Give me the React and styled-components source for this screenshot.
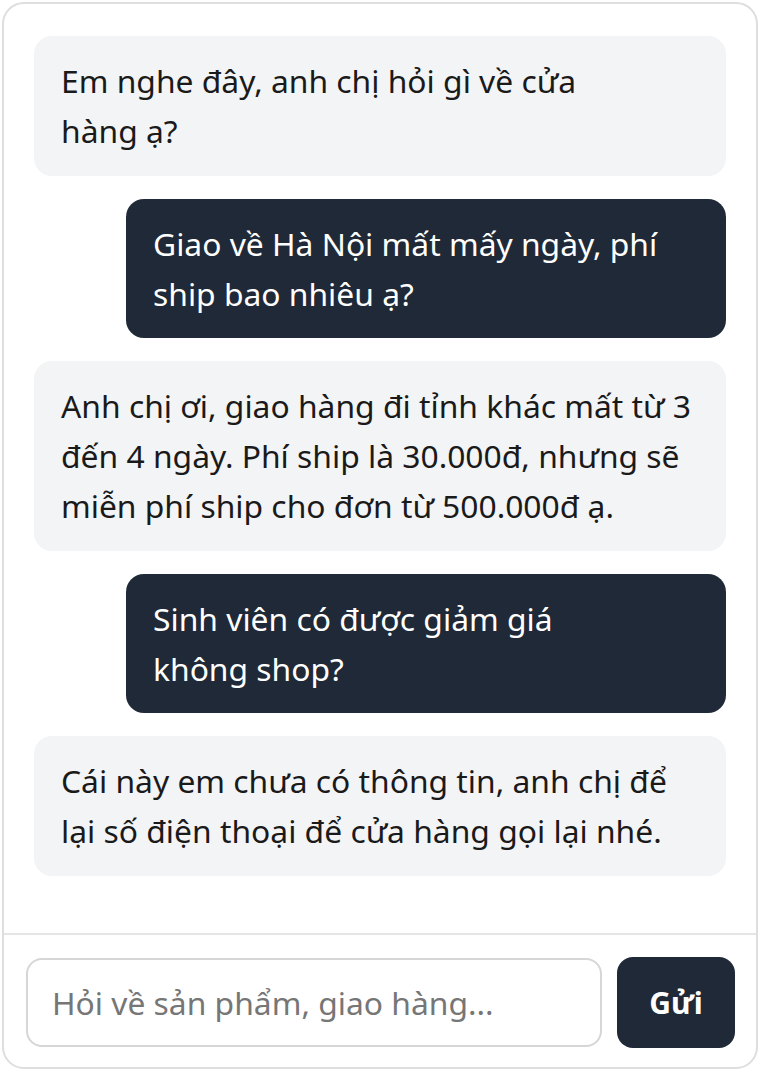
import React from "react";
import styled, { createGlobalStyle } from "styled-components";

const Global = createGlobalStyle`
  html, body { margin: 0; padding: 0; background: #ffffff; }
  body { padding: 2px; font-family: "Noto Sans", "Open Sans", sans-serif; }
  * { box-sizing: border-box; }
`;

const Card = styled.div`
  width: 756px;
  height: 1067px;
  border: 2px solid #dedede;
  border-radius: 22px;
  background: #ffffff;
  display: flex;
  flex-direction: column;
  overflow: hidden;
`;

const Messages = styled.div`
  flex: 1;
  display: flex;
  flex-direction: column;
  gap: 23px;
  padding: 32px 30px 0 30px;
`;

const Bubble = styled.div`
  align-self: ${(p) => (p.$user ? "flex-end" : "stretch")};
  width: ${(p) => (p.$user ? "600px" : "auto")};
  background: ${(p) => (p.$user ? "#1f2937" : "#f3f4f6")};
  color: ${(p) => (p.$user ? "#ffffff" : "#1a1a1a")};
  border-radius: 18px;
  padding: 20px 20px 19.5px 27px;
  font-size: 31.8px;
  line-height: 50px;
  white-space: nowrap;
`;

const Composer = styled.div`
  border-top: 2px solid #e5e5e5;
  display: flex;
  align-items: center;
  gap: 15px;
  padding: 22px 21px 19px 22px;
`;

const Input = styled.input`
  flex: 1;
  min-width: 0;
  height: 89px;
  border: 2px solid #d6d6d6;
  border-radius: 16px;
  padding: 0 24px;
  font-family: "Noto Sans", "Open Sans", sans-serif;
  font-size: 31.8px;
  color: #222;
  outline: none;
  &::placeholder { color: #767676; }
`;

const SendButton = styled.button`
  width: 118px;
  height: 91px;
  flex: none;
  border: none;
  border-radius: 16px;
  background: #1f2937;
  color: #ffffff;
  font-family: "Noto Sans", "Open Sans", sans-serif;
  font-weight: 700;
  font-size: 30px;
  cursor: pointer;
`;

const messages = [
  { user: false, lines: ["Em nghe đây, anh chị hỏi gì về cửa", "hàng ạ?"] },
  { user: true, lines: ["Giao về Hà Nội mất mấy ngày, phí", "ship bao nhiêu ạ?"] },
  {
    user: false,
    lines: [
      "Anh chị ơi, giao hàng đi tỉnh khác mất từ 3",
      "đến 4 ngày. Phí ship là 30.000đ, nhưng sẽ",
      "miễn phí ship cho đơn từ 500.000đ ạ.",
    ],
  },
  { user: true, lines: ["Sinh viên có được giảm giá", "không shop?"] },
  {
    user: false,
    lines: [
      "Cái này em chưa có thông tin, anh chị để",
      "lại số điện thoại để cửa hàng gọi lại nhé.",
    ],
  },
];

export default function App() {
  return (
    <>
      <Global />
      <Card>
        <Messages>
          {messages.map((m, i) => (
            <Bubble key={i} $user={m.user}>
              {m.lines.map((l, j) => (
                <React.Fragment key={j}>
                  {l}
                  {j < m.lines.length - 1 && <br />}
                </React.Fragment>
              ))}
            </Bubble>
          ))}
        </Messages>
        <Composer>
          <Input placeholder="Hỏi về sản phẩm, giao hàng..." />
          <SendButton>Gửi</SendButton>
        </Composer>
      </Card>
    </>
  );
}
